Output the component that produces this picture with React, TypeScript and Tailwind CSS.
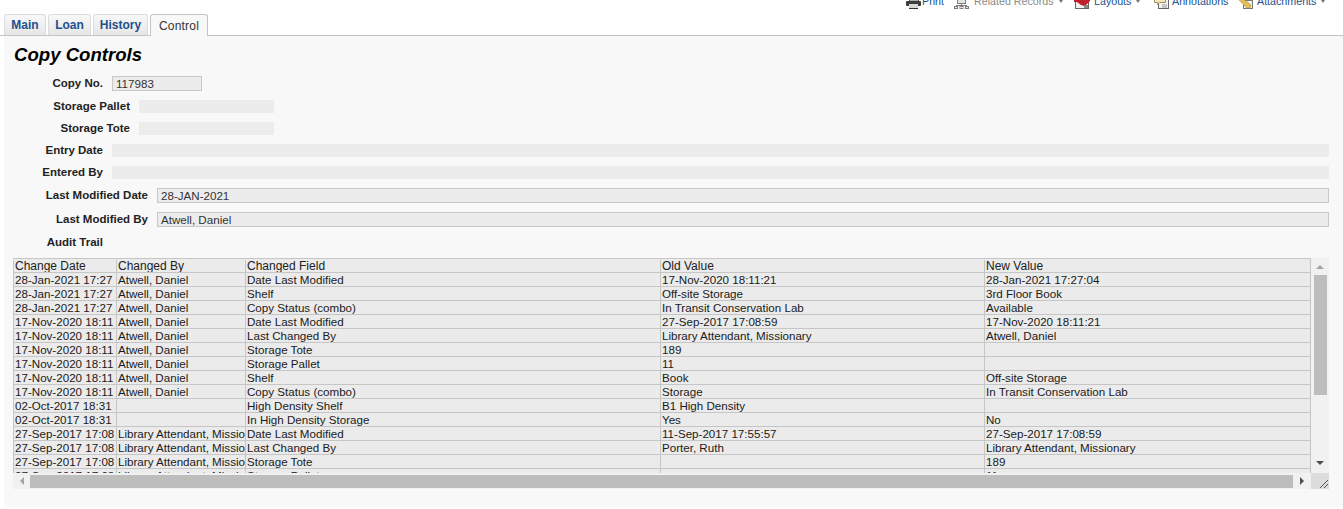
const MISSIO = "Library Attendant, Missio";

const rows: [string, string, string, string, string][] = [
  ["28-Jan-2021 17:27", "Atwell, Daniel", "Date Last Modified", "17-Nov-2020 18:11:21", "28-Jan-2021 17:27:04"],
  ["28-Jan-2021 17:27", "Atwell, Daniel", "Shelf", "Off-site Storage", "3rd Floor Book"],
  ["28-Jan-2021 17:27", "Atwell, Daniel", "Copy Status (combo)", "In Transit Conservation Lab", "Available"],
  ["17-Nov-2020 18:11", "Atwell, Daniel", "Date Last Modified", "27-Sep-2017 17:08:59", "17-Nov-2020 18:11:21"],
  ["17-Nov-2020 18:11", "Atwell, Daniel", "Last Changed By", "Library Attendant, Missionary", "Atwell, Daniel"],
  ["17-Nov-2020 18:11", "Atwell, Daniel", "Storage Tote", "189", ""],
  ["17-Nov-2020 18:11", "Atwell, Daniel", "Storage Pallet", "11", ""],
  ["17-Nov-2020 18:11", "Atwell, Daniel", "Shelf", "Book", "Off-site Storage"],
  ["17-Nov-2020 18:11", "Atwell, Daniel", "Copy Status (combo)", "Storage", "In Transit Conservation Lab"],
  ["02-Oct-2017 18:31", "", "High Density Shelf", "B1 High Density", ""],
  ["02-Oct-2017 18:31", "", "In High Density Storage", "Yes", "No"],
  ["27-Sep-2017 17:08", MISSIO, "Date Last Modified", "11-Sep-2017 17:55:57", "27-Sep-2017 17:08:59"],
  ["27-Sep-2017 17:08", MISSIO, "Last Changed By", "Porter, Ruth", "Library Attendant, Missionary"],
  ["27-Sep-2017 17:08", MISSIO, "Storage Tote", "", "189"],
  ["27-Sep-2017 17:08", MISSIO, "Storage Pallet", "", "11"],
];

const headers = ["Change Date", "Changed By", "Changed Field", "Old Value", "New Value"];
const cols = "grid grid-cols-[103px_129px_415px_324px_326px]";

type IconKind = "print" | "related" | "layouts" | "annotations" | "attachments";

function Tab({ label, width, active }: { label: string; width: string; active?: boolean }) {
  if (active) {
    return (
      <div className={`${width} relative -mb-px flex h-[22px] items-center justify-center rounded-t-[3px] border border-b-0 border-[#c4c4c4] bg-[#f8f8f8] text-[12px] tracking-[0.2px] text-[#333]`}>
        {label}
      </div>
    );
  }
  return (
    <div className={`${width} flex h-[21px] items-center justify-center rounded-t-[3px] border border-b-0 border-[#dcdcdc] bg-gradient-to-b from-[#f8f8f8] to-[#e6e6e6] text-[12px] font-bold text-[#23508f]`}>
      {label}
    </div>
  );
}

function Caret() {
  return <span className="ml-[5px] inline-block h-0 w-0 border-x-[2.5px] border-t-[3px] border-x-transparent border-t-[#777]" />;
}

// only the lower part of each icon shows, the toolbar is cut by the top of the page
function ToolbarIcon({ kind }: { kind: IconKind }) {
  return (
    <svg width="16" height="16" viewBox="0 0 16 16" className="shrink-0">
      {kind === "print" && (
        <g>
          <rect x="3.5" y="3" width="9" height="5" fill="#fff" stroke="#555" />
          <rect x="0" y="8" width="15" height="5" rx="1" fill="#3d3d3d" />
          <rect x="3" y="11" width="9" height="4" fill="#d8d8d8" />
          <path d="M3 15.5h9" stroke="#333" />
        </g>
      )}
      {kind === "related" && (
        <g fill="#e4e4e4" stroke="#7d7d7d">
          <rect x="3.5" y="2.5" width="8" height="8" />
          <path d="M7.5 10.5v2M2 12.5h11" fill="none" />
          <rect x="0.5" y="13.5" width="3" height="2" />
          <rect x="6" y="13.5" width="3" height="2" />
          <rect x="11.5" y="13.5" width="3" height="2" />
        </g>
      )}
      {kind === "layouts" && (
        <g>
          <rect x="1.5" y="3.5" width="13" height="12" fill="#f0f0f0" stroke="#666" />
          <path d="M0 4h6l2 3 3-3h5v4l-4 4-2 1-3-1-4-3H0z" fill="#c21f2c" />
          <rect x="10" y="12" width="4" height="3" fill="#888" />
        </g>
      )}
      {kind === "annotations" && (
        <g>
          <rect x="4.5" y="5.5" width="10" height="10" fill="#f2f2f2" stroke="#666" />
          <path d="M0.5 3.5h11v6h-6l-2 2v-2h-3z" fill="#f3e5c0" stroke="#9a8550" strokeWidth="0.9" />
          <path d="M8 12h5M8 14h5" stroke="#999" />
        </g>
      )}
      {kind === "attachments" && (
        <g>
          <rect x="5.5" y="7.5" width="9" height="8" fill="#f2f2f2" stroke="#777" />
          <path d="M0 6l3-2 10 8-1 3-3 0z" fill="#e3bd58" stroke="#b08e34" strokeWidth="0.6" />
        </g>
      )}
    </svg>
  );
}

function ToolItem({ label, kind, slot, gap, muted, caret }: { label: string; kind: IconKind; slot: string; gap: string; muted?: boolean; caret?: boolean }) {
  return (
    <div className={`flex items-center text-[10.7px] ${slot} ${muted ? "text-[#8a8a8a]" : "text-[#23508f]"}`}>
      <div className={gap}>
        <ToolbarIcon kind={kind} />
      </div>
      <span className="whitespace-nowrap">{label}</span>
      {caret && <Caret />}
    </div>
  );
}

function Label({ children, w }: { children: string; w: string }) {
  return <div className={`${w} shrink-0 pr-[9px] text-right text-[11.5px] font-bold leading-[14px] text-[#222]`}>{children}</div>;
}

function EmptyField({ label }: { label: string }) {
  return (
    <div className="flex h-[22px] items-center">
      <Label w="w-[98px]">{label}</Label>
      <div className="h-[13px] flex-1 bg-[#ececec]" />
    </div>
  );
}

function ShortField({ label }: { label: string }) {
  return (
    <div className="flex h-[22px] items-center">
      <Label w="w-[125px]">{label}</Label>
      <div className="h-[13px] w-[135px] bg-[#ececec]" />
    </div>
  );
}

function ValueField({ label, value }: { label: string; value: string }) {
  return (
    <div className="flex h-[24px] items-center">
      <Label w="w-[143px]">{label}</Label>
      <div className="flex h-[15px] flex-1 items-center border border-[#c8c8c8] bg-[#ececec] px-[3px] pt-px text-[11.6px] text-[#333]">{value}</div>
    </div>
  );
}

function Cell({ text }: { text: string }) {
  return <div className="overflow-hidden whitespace-nowrap border-l border-[#c6c6c6] pl-px">{text}</div>;
}

export default function App() {
  return (
    <div className="h-[509px] w-[1343px] overflow-hidden bg-white font-['Liberation_Sans',Arial,sans-serif]">
      <div className="relative flex h-[36px] items-end border-b border-[#c4c4c4] pl-[4px]">
        <div className="flex items-end gap-[2px]">
          <Tab label="Main" width="w-[42px]" />
          <Tab label="Loan" width="w-[43px]" />
          <Tab label="History" width="w-[55px]" />
          <Tab label="Control" width="w-[58px]" active />
        </div>
        <div className="absolute left-[906px] top-[-7px] flex h-[16px] items-center">
          <ToolItem label="Print" kind="print" slot="w-[48px]" gap="w-[16px]" />
          <ToolItem label="Related Records" kind="related" slot="w-[120px]" gap="w-[20px]" muted caret />
          <ToolItem label="Layouts" kind="layouts" slot="w-[80px]" gap="w-[20px]" caret />
          <ToolItem label="Annotations" kind="annotations" slot="w-[84px]" gap="w-[18px]" />
          <ToolItem label="Attachments" kind="attachments" slot="w-[90px]" gap="w-[19px]" caret />
        </div>
      </div>

      <div className="ml-[4px] h-[471px] bg-[#f8f8f8] pl-[10px] pr-[10px] pt-[7px]">
        <h1 className="text-[18.6px] font-bold italic leading-[24px] text-black">Copy Controls</h1>

        <div className="mt-[5px] flex h-[22px] items-center">
          <Label w="w-[98px]">Copy No.</Label>
          <div className="flex h-[15px] w-[90px] items-center border border-[#c8c8c8] bg-[#ececec] px-[3px] pt-px text-[11.6px] text-[#333]">117983</div>
        </div>
        <div className="mt-[1px] mr-[4px]">
          <ShortField label="Storage Pallet" />
          <ShortField label="Storage Tote" />
          <EmptyField label="Entry Date" />
          <EmptyField label="Entered By" />
          <ValueField label="Last Modified Date" value="28-JAN-2021" />
          <ValueField label="Last Modified By" value="Atwell, Daniel" />
        </div>
        <div className="flex h-[22px] items-center">
          <Label w="w-[98px]">Audit Trail</Label>
        </div>

        <div className="relative -ml-px mt-[5px] h-[231px] w-[1316px]">
          <div className="h-[215px] w-[1298px] overflow-hidden border-r border-t border-[#c6c6c6] bg-[#ebebeb] text-[11.6px] leading-[13px] text-[#1a1a1a]">
            <div className={`${cols} h-[14px] border-b border-[#c6c6c6] pt-px text-[12px] leading-[12px] text-[#222]`}>
              {headers.map((h) => (
                <Cell key={h} text={h} />
              ))}
            </div>
            {rows.map((r, i) => (
              <div key={i} className={`${cols} h-[14px] border-b border-[#c6c6c6]`}>
                {r.map((c, j) => (
                  <Cell key={j} text={c} />
                ))}
              </div>
            ))}
          </div>
          {/* scrollbars */}
          <div className="absolute left-[1298px] top-0 flex h-[215px] w-[18px] flex-col items-center bg-[#f1f1f1]">
            <div className="flex h-[17px] items-center">
              <span className="h-0 w-0 border-x-[4px] border-b-[4px] border-x-transparent border-b-[#a3a3a3]" />
            </div>
            <div className="h-[120px] w-[13px] bg-[#bdbdbd]" />
            <div className="mt-auto flex h-[20px] items-center">
              <span className="h-0 w-0 border-x-[4px] border-t-[4px] border-x-transparent border-t-[#505050]" />
            </div>
          </div>
          <div className="absolute left-0 top-[215px] flex h-[16px] w-[1298px] items-center bg-[#f1f1f1]">
            <div className="flex w-[17px] justify-center">
              <span className="h-0 w-0 border-y-[4px] border-r-[4px] border-y-transparent border-r-[#a3a3a3]" />
            </div>
            <div className="h-[13px] w-[1263px] bg-[#bdbdbd]" />
            <div className="flex flex-1 justify-center">
              <span className="h-0 w-0 border-y-[4px] border-l-[4px] border-y-transparent border-l-[#505050]" />
            </div>
          </div>
          <div className="absolute left-[1298px] top-[215px] flex h-[16px] w-[18px] items-end justify-end bg-[#dcdcdc]">
            <svg width="10" height="10" viewBox="0 0 10 10">
              <path d="M1 9 9 1M5 9 9 5" stroke="#555" strokeWidth="1" fill="none" />
            </svg>
          </div>
        </div>
      </div>
    </div>
  );
}
